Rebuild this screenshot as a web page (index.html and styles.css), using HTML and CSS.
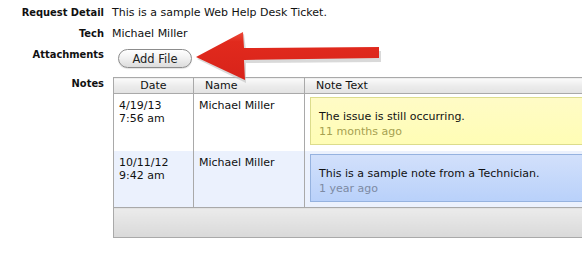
FILE: index.html
```html
<!DOCTYPE html>
<html lang="en">
<head>
    <meta charset="UTF-8">
    <title>Ticket Notes</title>
    <link rel="stylesheet" href="styles.css">
</head>
<body>

<div class="ticket">
    <div class="field">
        <div class="label">Request Detail</div>
        <div class="value">This is a sample Web Help Desk Ticket.</div>
    </div>
    <div class="field">
        <div class="label">Tech</div>
        <div class="value">Michael Miller</div>
    </div>
    <div class="field attach">
        <div class="label">Attachments</div>
        <div class="value"><button class="pill">Add File</button></div>
    </div>
    <div class="field notes">
        <div class="label">Notes</div>
        <div class="value">
            <table class="notes-table">
                <thead>
                    <tr>
                        <th class="col-date">Date</th>
                        <th class="col-name">Name</th>
                        <th class="col-text">Note Text</th>
                    </tr>
                </thead>
                <tbody>
                    <tr>
                        <td>4/19/13<br>7:56 am</td>
                        <td>Michael Miller</td>
                        <td>
                            <div class="note yellow">
                                <div class="note-body">The issue is still occurring.</div>
                                <div class="note-age">11 months ago</div>
                            </div>
                        </td>
                    </tr>
                    <tr class="alt">
                        <td>10/11/12<br>9:42 am</td>
                        <td>Michael Miller</td>
                        <td>
                            <div class="note blue">
                                <div class="note-body">This is a sample note from a Technician.</div>
                                <div class="note-age">1 year ago</div>
                            </div>
                        </td>
                    </tr>
                </tbody>
                <tfoot>
                    <tr><td colspan="3"></td></tr>
                </tfoot>
            </table>
        </div>
    </div>

    <!-- callout arrow pointing at the button -->
    <svg class="arrow" width="200" height="70" viewBox="0 0 200 70">
        <defs>
            <linearGradient id="shaft" x1="0" y1="0" x2="0" y2="1">
                <stop offset="0" stop-color="#ec4a3a"/>
                <stop offset="0.2" stop-color="#e12a1d"/>
                <stop offset="1" stop-color="#d8231a"/>
            </linearGradient>
        </defs>
        <polygon points="1,28 48,3 50,19 185,20 185,31 50,32 50,52" fill="#b9b9b9" opacity="0.55" transform="translate(1,2)"/>
        <polygon points="1,28 48,3 49,19 184,18 184,29 49,31 50,51" fill="url(#shaft)"/>
    </svg>
</div>

</body>
</html>
```

FILE: styles.css
```css
html, body {
    margin: 0;
    padding: 0;
    background: #fff;
    overflow: hidden;
}
body {
    font-family: "DejaVu Sans", Verdana, sans-serif;
    font-size: 11px;
    color: #111;
}
.ticket {
    position: relative;
    padding-top: 6px;
    width: 720px;
}
.field {
    display: flex;
    align-items: flex-start;
    height: 21px;
}
.label {
    width: 104px;
    flex: none;
    text-align: right;
    font-family: "DejaVu Sans Condensed", "DejaVu Sans", sans-serif;
    font-weight: bold;
    line-height: 14px;
}
.value {
    padding-left: 8px;
    line-height: 14px;
}
.attach .value {
    padding-left: 14px;
}
.pill {
    font-family: inherit;
    font-size: 11.5px;
    color: #222;
    height: 19px;
    width: 74px;
    margin-top: 1px;
    padding: 0;
    border: 1px solid #8c8c8c;
    border-radius: 10px;
    background: linear-gradient(#ffffff, #f2f2f2 45%, #dcdcdc);
    box-shadow: 0 1px 1px rgba(0,0,0,0.12);
}
.notes {
    height: auto;
    margin-top: 8px;
}
.notes .value {
    padding-left: 9px;
}
.notes-table {
    border-collapse: collapse;
    border: 1px solid #a9a9a9;
    width: 620px;
}
.notes-table th {
    font-weight: normal;
    text-align: left;
    height: 15px;
    padding: 0 0 0 11px;
    line-height: 15px;
    border: 1px solid #a9a9a9;
    background: linear-gradient(#fbfbfb, #ececec 50%, #e2e2e2);
}
.notes-table th.col-date {
    text-align: center;
    padding-left: 0;
    width: 79px;
}
.notes-table th.col-name {
    width: 99px;
}
.notes-table td {
    vertical-align: top;
    border-left: 1px solid #a9a9a9;
    padding: 5px 5px 3px 5px;
    line-height: 13px;
}
.notes-table tbody tr {
    height: 57px;
}
.notes-table tbody tr.alt {
    background: #ebf1fd;
}
.notes-table tbody td:nth-child(3) {
    padding: 3px 0 3px 5px;
}
.notes-table tfoot td {
    height: 29px;
    padding: 0;
    border-top: 1px solid #a9a9a9;
    background: linear-gradient(#ebebeb, #d9d9d9);
}
.note {
    height: 48px;
    box-sizing: border-box;
    padding: 11px 8px 0 8px;
    border: 1px solid;
}
.note-body {
    line-height: 15px;
}
.note-age {
    line-height: 15px;
}
.yellow {
    border-color: #dcdc8c;
    background: linear-gradient(#fffbc6, #fffdb5);
}
.yellow .note-age {
    color: #a6a150;
}
.blue {
    border-color: #95b2df;
    background: linear-gradient(#d2e0fb, #b9d1fa);
}
.blue .note-age {
    color: #7d8aa3;
}
.arrow {
    position: absolute;
    left: 195px;
    top: 29px;
}
```
